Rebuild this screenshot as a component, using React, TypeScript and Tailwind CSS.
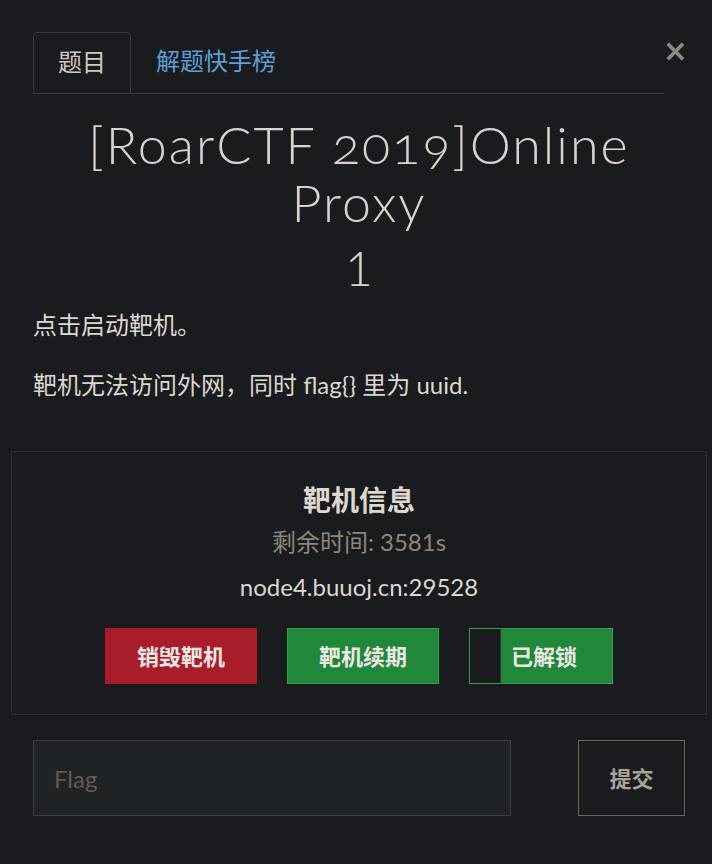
import React, { useState } from "react";

const body = "font-['Lato','Noto_Sans_CJK_SC',sans-serif]";

function Tabs() {
  return (
    <div className="mr-[21px] flex items-end border-b border-[#3a3b3e]">
      <div className="flex h-[61px] w-[98px] items-center justify-center rounded-t-[5px] border border-b-0 border-[#3a3b3e] pb-[3px] text-[24px] text-[#cfcac1]">
        题目
      </div>
      <div className="flex h-[61px] items-center px-[25px] pb-[3px] text-[24px] text-[#5d9fd3]">
        解题快手榜
      </div>
    </div>
  );
}

// 靶机信息 박스
function TargetBox() {
  return (
    <div className="mx-[-22px] mt-[50px] flex flex-col items-center border border-[#2c2d30] pb-[30px] pt-[29px]">
      <h3 className="text-[28px] font-bold leading-[38px] text-[#dcd8d0]">靶机信息</h3>
      <p className="mt-[7px] text-[24px] leading-[32px] text-[#8d877c]">剩余时间: 3581s</p>
      <p className="mt-[13px] text-[24px] leading-[32px] text-[#dcd8d0]">node4.buuoj.cn:29528</p>
      <div className="mt-[25px] flex gap-[30px]">
        <button className="flex h-[56px] w-[152px] items-center justify-center bg-[#a91d2b] text-[22px] font-bold text-[#ece9e4]">
          销毁靶机
        </button>
        <button className="flex h-[56px] w-[152px] items-center justify-center border border-[#2aa542] bg-[#21873a] text-[22px] font-bold text-[#ece9e4]">
          靶机续期
        </button>
        <button className="flex h-[56px] w-[144px] border border-[#2aa542] bg-[#21873a] text-[22px] font-bold text-[#ece9e4]">
          <span className="h-full w-[31px] border-r border-[#333] bg-[#1a1b1e]" />
          <span className="flex flex-1 items-center pl-[10px]">已解锁</span>
        </button>
      </div>
    </div>
  );
}

export default function App() {
  const [flag, setFlag] = useState("");

  return (
    <div className={`${body} min-h-[864px] bg-[#1a1b1e] pl-[33px] pr-[27px] pt-[32px]`}>
      <div className="relative">
        <Tabs />
        <span className="absolute right-[-3px] top-[4px] font-['DejaVu_Sans',sans-serif] text-[30px] font-bold leading-none text-[#8a8a8a]">
          ×
        </span>
      </div>

      <h2 className="mx-auto mt-[21px] max-w-[580px] text-center font-['Lato',sans-serif] text-[52px] font-light leading-[58px] tracking-[2px] text-[#d8d4cc] oldstyle-nums">
        [RoarCTF 2019]Online Proxy
      </h2>
      <div className="mt-[9px] text-center text-[48px] font-light leading-[56px] text-[#d8d4cc]">1</div>

      <p className="mt-[13px] text-[24px] leading-[32px] text-[#dcd8d0]">点击启动靶机。</p>
      <p className="mt-[28px] text-[24px] leading-[32px] text-[#dcd8d0]">靶机无法访问外网，同时 flag{"{}"} 里为 uuid.</p>

      <TargetBox />

      <div className="mt-[25px] flex items-stretch justify-between">
        <input
          value={flag}
          onChange={(e) => setFlag(e.target.value)}
          placeholder="Flag"
          className="h-[76px] w-[478px] border border-[#3d3e41] bg-[#202326] px-[20px] text-[24px] text-[#dcd8d0] outline-none placeholder:text-[#5f5b54]"
        />
        <button className="h-[76px] w-[107px] border border-[#6e6557] text-[22px] font-bold text-[#a8a297]">
          提交
        </button>
      </div>
    </div>
  );
}
